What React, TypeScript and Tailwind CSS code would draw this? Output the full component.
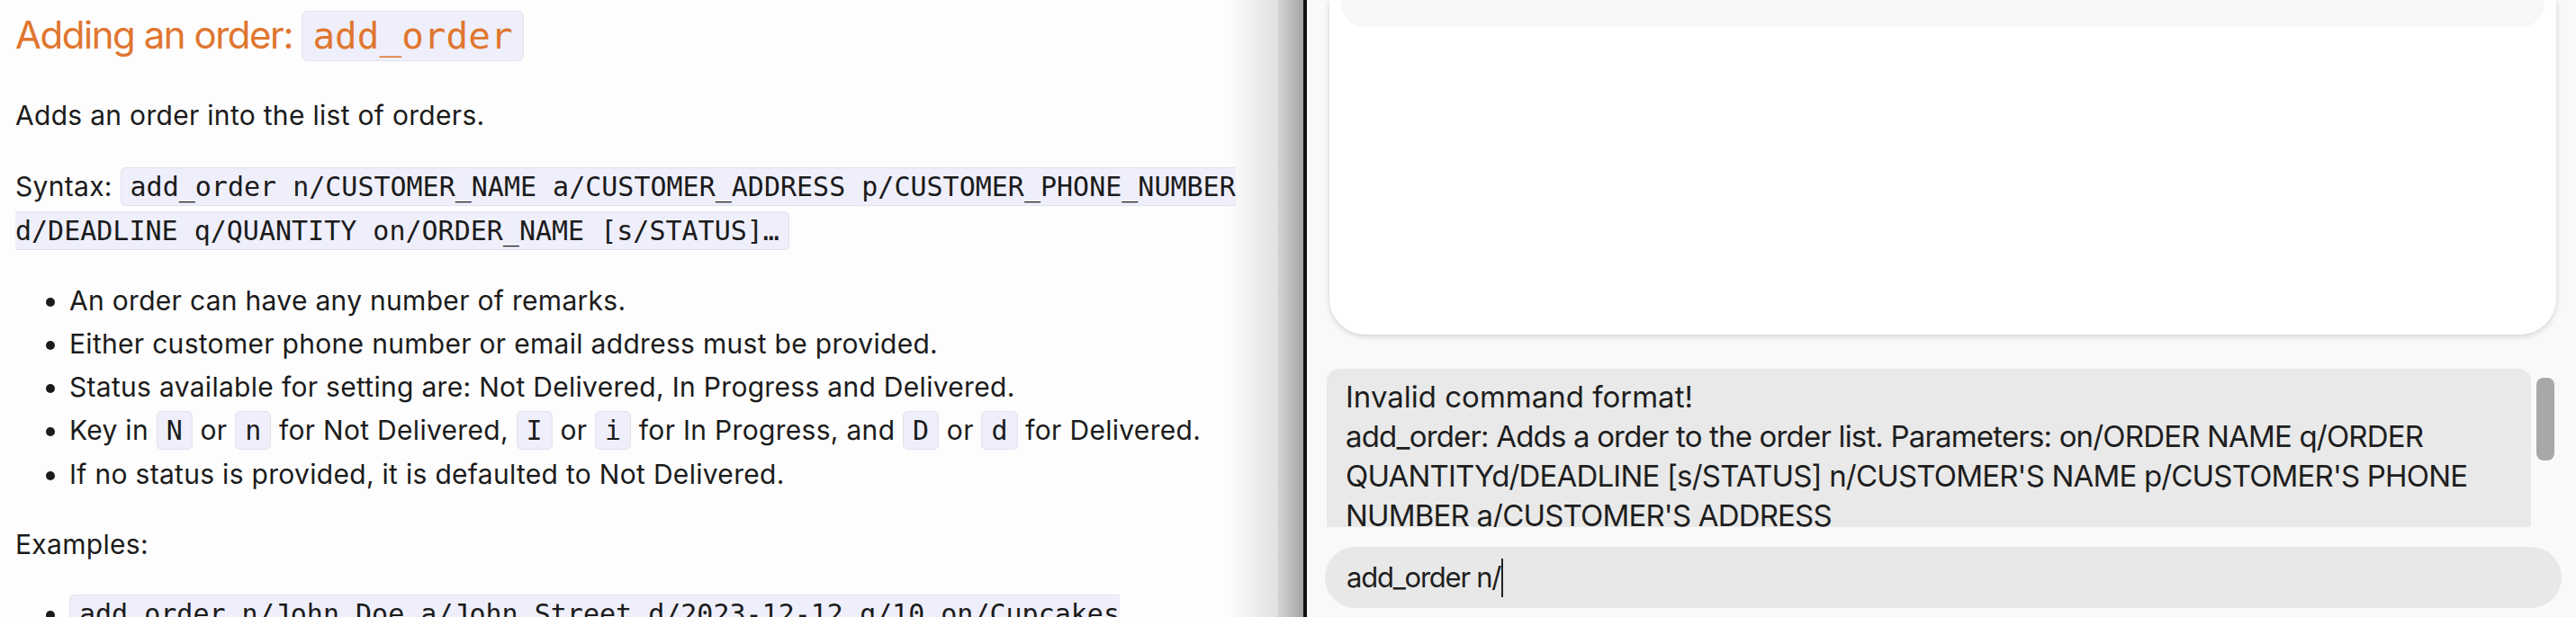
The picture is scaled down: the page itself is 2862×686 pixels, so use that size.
import React from "react";

const codeCls =
  "rounded-[6px] border border-[#e2e2ec] bg-[#efeffb] px-[10px] py-[3px] font-['DejaVu_Sans_Mono',monospace] text-[30px] tracking-normal text-[#1b1b1b]";

function Code({ children }: { children: React.ReactNode }) {
  return <code className={codeCls}>{children}</code>;
}

function UserGuide() {
  return (
    <div className="flex h-full shrink-0">
      {/* doc content, background fades into the window shadow */}
      <div className="h-full w-[1420px] overflow-hidden bg-[linear-gradient(to_right,#fdfdfd_1365px,#e0e0e0_1420px)] pl-[17px] pr-[40px] font-['Inter',sans-serif] text-[#1b1b1b]">
        <h2 className="mt-[12px] text-[42px] font-normal leading-[54px] tracking-[-0.035em] text-[#e0762f]">
          Adding an order:{" "}
          <code className="rounded-[7px] border border-[#e2e2ec] bg-[#efeffb] px-[11px] py-[3px] font-['DejaVu_Sans_Mono',monospace] text-[41px] tracking-normal text-[#e0762f]">
            add_order
          </code>
        </h2>

        <p className="mt-[37px] text-[30px] leading-[48px] tracking-[0.01em]">
          Adds an order into the list of orders.
        </p>

        <p className="mt-[31px] text-[30px] leading-[48px] tracking-[0.01em]">
          Syntax:{" "}
          <Code>
            add_order n/CUSTOMER_NAME a/CUSTOMER_ADDRESS p/CUSTOMER_PHONE_NUMBER
            d/DEADLINE q/QUANTITY on/ORDER_NAME [s/STATUS]…
          </Code>
        </p>

        <ul className="mt-[29px] list-disc pl-[60px] text-[30px] leading-[48px] tracking-[0.01em]">
          <li>An order can have any number of remarks.</li>
          <li>Either customer phone number or email address must be provided.</li>
          <li>Status available for setting are: Not Delivered, In Progress and Delivered.</li>
          <li>
            Key in <Code>N</Code> or <Code>n</Code> for Not Delivered, <Code>I</Code> or{" "}
            <Code>i</Code> for In Progress, and <Code>D</Code> or <Code>d</Code> for Delivered.
          </li>
          <li>If no status is provided, it is defaulted to Not Delivered.</li>
        </ul>

        <p className="mt-[30px] text-[30px] leading-[48px] tracking-[0.01em]">Examples:</p>

        <ul className="mt-[29px] list-disc pl-[60px] text-[30px] leading-[48px]">
          <li>
            <Code>
              add_order n/John Doe a/John Street d/2023-12-12 q/10 on/Cupcakes p/98765432
            </Code>
          </li>
        </ul>
      </div>
      <div className="h-full w-px bg-[#cbcbcb]" />
      <div className="h-full w-[27px] bg-gradient-to-r from-[#d4d4d4] to-[#a4a4a4]" />
      <div className="h-full w-[4px] bg-[#111111]" />
    </div>
  );
}

function AppWindow() {
  return (
    <div className="flex h-full flex-1 flex-col bg-[#f9f9f9] font-['Inter',sans-serif] text-[#1e1e1e]">
      {/* order list card */}
      <div className="ml-[25px] mr-[22px] h-[372px] shrink-0 rounded-b-[40px] bg-white px-[13px] shadow-[0_2px_6px_rgba(0,0,0,0.16)]">
        <div className="h-[30px] rounded-b-[26px] bg-[#f7f7f7]" />
      </div>

      {/* result display */}
      <div className="ml-[22px] mr-[24px] mt-[38px] flex h-[176px] shrink-0 gap-[6px]">
        <div className="flex-1 overflow-hidden rounded-t-[14px] bg-[#e9e9e9] pl-[21px] pt-[9px] text-[33px] leading-[44px] tracking-[-0.025em]">
          <div className="whitespace-nowrap tracking-[0em]">Invalid command format!</div>
          <div className="whitespace-nowrap">
            add_order: Adds a order to the order list. Parameters: on/ORDER NAME q/ORDER
          </div>
          <div className="whitespace-nowrap">
            QUANTITYd/DEADLINE [s/STATUS] n/CUSTOMER'S NAME p/CUSTOMER'S PHONE
          </div>
          <div className="whitespace-nowrap">NUMBER a/CUSTOMER'S ADDRESS</div>
        </div>
        <div className="w-[20px] pt-[10px]">
          <div className="h-[92px] rounded-[8px] bg-[#a8a8a8]" />
        </div>
      </div>

      {/* command box */}
      <div className="ml-[20px] mr-[16px] mt-[22px] flex h-[68px] shrink-0 items-center rounded-full bg-[#e8e8e8] pl-[24px] text-[31px] tracking-[-0.04em]">
        <span>add_order n/</span>
        <span className="ml-[1px] h-[43px] w-[2px] bg-[#222222]" />
      </div>
    </div>
  );
}

export default function App() {
  return (
    <div className="flex h-[686px] w-[2862px] overflow-hidden">
      <UserGuide />
      <AppWindow />
    </div>
  );
}
